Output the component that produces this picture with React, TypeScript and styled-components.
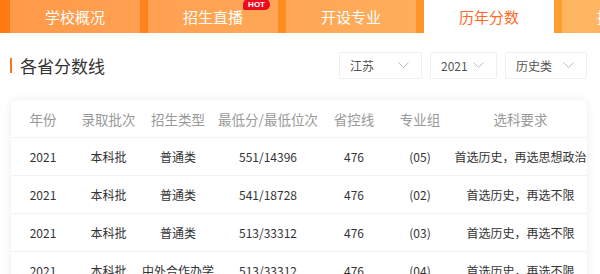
import React from 'react'
import styled, { createGlobalStyle } from 'styled-components'

const GlobalStyle = createGlobalStyle`
  html, body {
    margin: 0;
    padding: 0;
    background: #fff;
    overflow: hidden;
  }
  body {
    font-family: "Noto Sans CJK SC", "Noto Sans", sans-serif;
  }
`

const tabs = [
  { name: '学校概况' },
  { name: '招生直播', hot: true },
  { name: '开设专业' },
  { name: '历年分数', active: true },
  { name: '招生计划' },
]

const filters = [
  { label: '江苏', width: 83 },
  { label: '2021', width: 67 },
  { label: '历史类', width: 82 },
]

const columns = ['年份', '录取批次', '招生类型', '最低分/最低位次', '省控线', '专业组', '选科要求']

const rows = [
  ['2021', '本科批', '普通类', '551/14396', '476', '(05)', '首选历史，再选思想政治'],
  ['2021', '本科批', '普通类', '541/18728', '476', '(02)', '首选历史，再选不限'],
  ['2021', '本科批', '普通类', '513/33312', '476', '(03)', '首选历史，再选不限'],
  ['2021', '本科批', '中外合作办学', '513/33312', '476', '(04)', '首选历史，再选不限'],
]

const Chevron: React.FC = () => (
  <svg width="11" height="7" viewBox="0 0 11 7">
    <polyline points="0.5,0.5 5.5,5.5 10.5,0.5" fill="none" stroke="#bdbdbd" strokeWidth="1" />
  </svg>
)

const App: React.FC = () => {
  return (
    <StyledPage>
      <GlobalStyle />
      <StyledTabBar>
        {tabs.map((tab) => (
          <StyledTab key={tab.name} active={tab.active}>
            {tab.name}
            {tab.hot && <StyledHot>HOT</StyledHot>}
          </StyledTab>
        ))}
      </StyledTabBar>

      <StyledHeading>
        <StyledTitle>各省分数线</StyledTitle>
        <StyledFilters>
          {filters.map((f) => (
            <StyledSelect key={f.label} w={f.width}>
              <span>{f.label}</span>
              <Chevron />
            </StyledSelect>
          ))}
        </StyledFilters>
      </StyledHeading>

      <StyledCard>
        <StyledRow head>
          {columns.map((c) => (
            <StyledCell key={c}>{c}</StyledCell>
          ))}
        </StyledRow>
        {rows.map((row, i) => (
          <StyledRow key={i}>
            {row.map((v, j) => (
              <StyledCell key={j}>{v}</StyledCell>
            ))}
          </StyledRow>
        ))}
      </StyledCard>
    </StyledPage>
  )
}

const StyledPage = styled.div`
  width: 600px;
  height: 274px;
  overflow: hidden;
`

const StyledTabBar = styled.div`
  display: flex;
  gap: 8px;
  height: 33px;
  padding-left: 10px;
  background: linear-gradient(90deg, #ff7a12 0%, #ff8d22 50%, #ffa031 100%);
  overflow: hidden;
`

const StyledTab = styled.div<{ active?: boolean }>`
  position: relative;
  flex: 0 0 130px;
  display: flex;
  align-items: center;
  justify-content: center;
  font-size: 15px;
  color: ${(props) => (props.active ? '#ff6a26' : '#fff')};
  background: ${(props) => (props.active ? '#fff' : 'rgba(255, 255, 255, 0.24)')};
`

const StyledHot = styled.span`
  position: absolute;
  top: -1px;
  right: 8px;
  height: 11px;
  padding: 0 5px;
  border-radius: 6px 6px 6px 2px;
  background: #ee0a1f;
  color: #fff;
  font-family: "Liberation Sans", Arial, sans-serif;
  font-size: 8px;
  font-weight: 700;
  line-height: 12px;
`

const StyledHeading = styled.div`
  display: flex;
  align-items: center;
  justify-content: space-between;
  margin-top: 19px;
  padding: 0 13px 0 10px;
  height: 27px;
`

const StyledTitle = styled.h3`
  margin: 0;
  padding-left: 8px;
  border-left: 2px solid #ff7418;
  font-size: 17px;
  font-weight: 400;
  line-height: 15px;
  color: #333;
`

const StyledFilters = styled.div`
  display: flex;
  gap: 8px;
`

const StyledSelect = styled.div<{ w: number }>`
  box-sizing: border-box;
  display: flex;
  align-items: center;
  justify-content: space-between;
  width: ${(props) => props.w}px;
  height: 27px;
  padding: 0 12px 0 10px;
  border: 1px solid #efefef;
  border-radius: 2px;
  font-size: 12px;
  color: #555;
`

const StyledCard = styled.div`
  margin: 21px 13px 0 11px;
  border-radius: 6px;
  background: #fff;
  box-shadow: 0 0 10px rgba(0, 0, 0, 0.08);
`

const StyledRow = styled.div<{ head?: boolean }>`
  box-sizing: border-box;
  display: grid;
  grid-template-columns: 64px 67px 72px 108px 64px 68px 1fr;
  align-items: center;
  height: 38px;
  border-bottom: 1px solid #f2f2f2;
  font-size: ${(props) => (props.head ? '13.5px' : '12px')};
  color: ${(props) => (props.head ? '#999' : '#333')};
`

const StyledCell = styled.div`
  text-align: center;
  white-space: nowrap;
`

export default App
